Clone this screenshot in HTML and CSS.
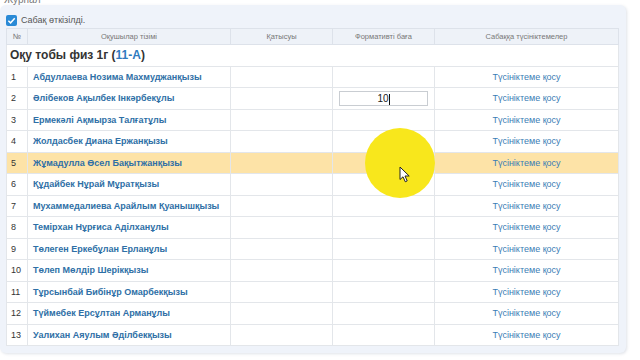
FILE: index.html
```html
<!DOCTYPE html>
<html lang="kk">
<head>
  <meta charset="UTF-8">
  <meta name="viewport" content="width=device-width, initial-scale=1.0">
  <title>Журнал</title>
  <link rel="stylesheet" href="styles.css">
</head>
<body>
  <div class="title">Журнал</div>
  <div class="card">
    <label class="check"><span class="box"><svg width="9" height="9" viewBox="0 0 10 10"><path d="M1.5 5.2 L4 7.6 L8.6 2.4" fill="none" stroke="white" stroke-width="1.6"/></svg></span> Сабақ өткізілді.</label>

    <table class="jrn">
      <thead>
        <tr>
          <th class="num">№</th>
          <th class="name">Оқушылар тізімі</th>
          <th class="att">Қатысуы</th>
          <th class="mark">Формативті баға</th>
          <th>Сабаққа түсініктемелер</th>
        </tr>
      </thead>
      <tbody>
        <tr class="group"><td colspan="5">Оқу тобы физ 1г (<span>11-А</span>)</td></tr>
        <tr><td class="num">1</td><td class="nm">Абдуллаева Нозима Махмуджанқызы</td><td></td><td></td><td class="cm">Түсініктеме қосу</td></tr>
        <tr><td class="num">2</td><td class="nm">Әлібеков Ақылбек Інкәрбекұлы</td><td></td><td class="inp"><div class="field">10<i class="caret"></i></div></td><td class="cm">Түсініктеме қосу</td></tr>
        <tr><td class="num">3</td><td class="nm">Ермекәлі Ақмырза Талғатұлы</td><td></td><td></td><td class="cm">Түсініктеме қосу</td></tr>
        <tr><td class="num">4</td><td class="nm">Жолдасбек Диана Ержанқызы</td><td></td><td></td><td class="cm">Түсініктеме қосу</td></tr>
        <tr class="hl"><td class="num">5</td><td class="nm">Жұмадулла Өсел Бақытжанқызы</td><td></td><td></td><td class="cm">Түсініктеме қосу</td></tr>
        <tr><td class="num">6</td><td class="nm">Құдайбек Нұрай Мұратқызы</td><td></td><td></td><td class="cm">Түсініктеме қосу</td></tr>
        <tr><td class="num">7</td><td class="nm">Мухаммедалиева Арайлым Қуанышқызы</td><td></td><td></td><td class="cm">Түсініктеме қосу</td></tr>
        <tr><td class="num">8</td><td class="nm">Темірхан Нұрғиса Аділханұлы</td><td></td><td></td><td class="cm">Түсініктеме қосу</td></tr>
        <tr><td class="num">9</td><td class="nm">Төлеген Еркебұлан Ерланұлы</td><td></td><td></td><td class="cm">Түсініктеме қосу</td></tr>
        <tr><td class="num">10</td><td class="nm">Төлеп Мөлдір Шерікқызы</td><td></td><td></td><td class="cm">Түсініктеме қосу</td></tr>
        <tr><td class="num">11</td><td class="nm">Тұрсынбай Бибінұр Омарбекқызы</td><td></td><td></td><td class="cm">Түсініктеме қосу</td></tr>
        <tr><td class="num">12</td><td class="nm">Түймебек Ерсұлтан Арманұлы</td><td></td><td></td><td class="cm">Түсініктеме қосу</td></tr>
        <tr><td class="num">13</td><td class="nm">Уалихан Аяулым Әділбекқызы</td><td></td><td></td><td class="cm">Түсініктеме қосу</td></tr>
      </tbody>
    </table>
  </div>

  <div class="spot"></div>
  <svg class="pointer" width="12" height="17" viewBox="0 0 12 17"><path d="M1 1 L1 13.5 L4 10.8 L6.3 15.8 L8.2 14.9 L6 10 L10.2 10 Z" fill="white" stroke="#222" stroke-width="1"/></svg>
</body>
</html>
```

FILE: styles.css
```css
* {
  padding: 0;
  margin: 0;
  box-sizing: border-box;
}

body {
  background: white;
  font-family: "Liberation Sans", Arial, sans-serif;
  color: #333;
  width: 640px;
  height: 360px;
  overflow: hidden;
  position: relative;
}

.title {
  height: 5px;
  line-height: 0;
  font-size: 10px;
  color: #777;
  padding-left: 4px;
  overflow: hidden;
}

.card {
  width: 626px;
  height: 348px;
  margin-left: 0;
  background: #eff3fa;
  border-radius: 6px;
  box-shadow: 1px 1px 3px rgba(150, 160, 180, 0.3);
  padding: 7px 6px 0 6px;
}

.check {
  display: flex;
  align-items: center;
  gap: 4px;
  font-size: 9px;
  color: #555;
  height: 16px;
}

.box {
  width: 11px;
  height: 11px;
  border-radius: 2px;
  background: #2a8ad6;
  display: flex;
  align-items: center;
  justify-content: center;
}

.jrn {
  width: 613px;
  border-collapse: collapse;
  background: white;
  table-layout: fixed;
  font-size: 9px;
}

.jrn th {
  height: 16px;
  font-weight: normal;
  font-size: 7.5px;
  color: #777;
  background: #eef2f8;
  border: 1px solid #dde2ea;
}

.jrn .num { width: 21px; }
.jrn .name { width: 203px; }
.jrn .att { width: 102px; }
.jrn .mark { width: 102px; }

.jrn td {
  height: 21.5px;
  border: 1px solid #e3e6ea;
}

.jrn td.num {
  padding-left: 4px;
  color: #333;
}

.group td {
  font-size: 12px;
  font-weight: bold;
  color: #333;
  padding-left: 3px;
}

.group span {
  color: #2f7bbf;
}

.nm {
  padding-left: 5px;
  color: #2e6fa6;
  font-weight: bold;
}

.cm {
  text-align: center;
  color: #3b7db5;
}

.hl td {
  background: #fde3a7;
}

.inp {
  padding: 0 6px;
}

.field {
  height: 15px;
  border: 1px solid #c9cdd2;
  text-align: center;
  font-size: 10px;
  line-height: 13px;
  color: #222;
}

.caret {
  display: inline-block;
  width: 1px;
  height: 11px;
  background: #111;
  vertical-align: middle;
}

.spot {
  position: absolute;
  left: 365px;
  top: 128px;
  width: 70px;
  height: 70px;
  border-radius: 50%;
  background: #f8e71c;
}

.pointer {
  position: absolute;
  left: 399px;
  top: 166px;
}
```
